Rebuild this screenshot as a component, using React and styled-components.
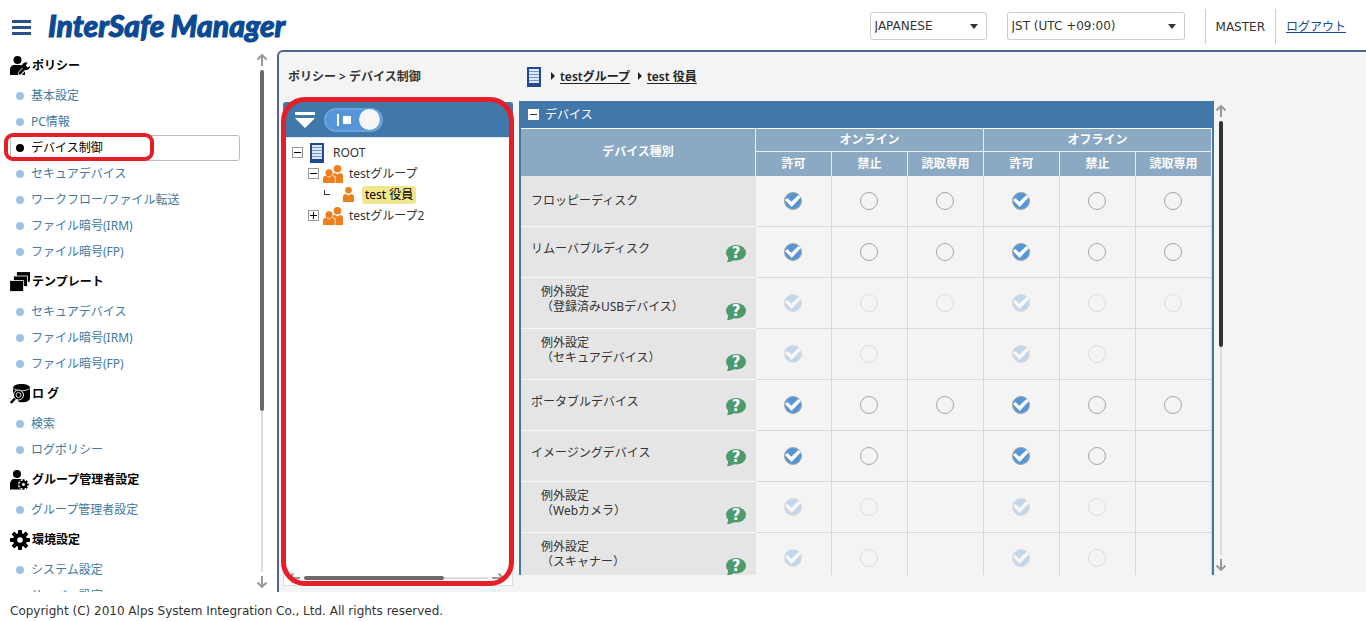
import React, { useState } from 'react';
import styled, { createGlobalStyle, css } from 'styled-components';

const blue = '#4277a9';
const red = '#e61e28';

const Global = createGlobalStyle`
  *, *::before, *::after { box-sizing: border-box; }
  body {
    margin: 0;
    background: #fff;
    color: #333;
    font: 12px/16px "Noto Sans", "Noto Sans CJK JP", sans-serif;
  }
  ul { list-style: none; margin: 0; padding: 0; }
  button { padding: 0; border: 0; background: none; font: inherit; color: inherit; cursor: pointer; }
`;

const Page = styled.div`
  height: 100vh;
  display: flex;
  flex-direction: column;
`;

const Header = styled.header`
  flex: none;
  height: 50px;
  padding: 2px 20px 0 12px;
  display: flex;
  align-items: center;
`;

const MenuButton = styled.button`
  width: 19px;
  height: 15px;
  margin: 2px 17px 0 0;
  border-top: 3px solid #2c4f8f;
  border-bottom: 3px solid #2c4f8f;
  display: flex;
  align-items: center;
  &::before {
    content: "";
    width: 100%;
    height: 3px;
    background: #2c4f8f;
  }
`;

const Logo = styled.h1`
  margin: 0 auto 2px 0;
  color: #0a4a94;
  font: italic 900 30px/34px Lato, sans-serif;
  -webkit-text-stroke: 1px #0a4a94;
  white-space: nowrap;
`;

const SelectBox = styled.div`
  width: ${(p) => p.$width}px;
  height: 28px;
  margin-right: 20px;
  padding-right: 8px;
  display: flex;
  align-items: center;
  border: 1px solid #ccc;
  border-radius: 3px;
  &::after {
    content: "";
    flex: none;
    border: 4px solid transparent;
    border-top: 5px solid #333;
    border-bottom: 0;
  }
`;

const Select = styled.select`
  flex: 1;
  min-width: 0;
  height: 100%;
  padding: 0 4px;
  appearance: none;
  border: 0;
  background: transparent;
  color: #333;
  font: 12px/16px "DejaVu Sans", sans-serif;
`;

const HeaderCell = styled.div`
  height: 35px;
  padding: 2px 0 0 10px;
  display: flex;
  align-items: center;
  border-left: 1px solid #ccc;
  font-family: "DejaVu Sans", "Noto Sans CJK JP", sans-serif;
  & + & { margin-left: 10px; }
`;

const Logout = styled.a`
  color: #1a4a9c;
`;

const Body = styled.div`
  flex: 1;
  min-height: 0;
  display: flex;
`;

const Sidebar = styled.nav`
  flex: none;
  width: 277px;
  padding-right: 9px;
  display: flex;
  overflow: hidden;
`;

const SideMenu = styled.div`
  flex: 1;
  margin-top: -1px;
  padding-right: 16px;
  overflow: hidden;
`;

const SideHeading = styled.h2`
  height: 34px;
  margin: 0;
  padding: 0 0 1px 10px;
  display: flex;
  align-items: center;
  gap: 2px;
  color: #000;
  font-size: 12px;
  font-weight: 600;
  svg { flex: none; }
`;

const SideItem = styled.li`
  position: relative;
  height: 26px;
  margin-left: 10px;
  border: 1px solid ${(p) => (p.$active ? '#bbb' : 'transparent')};
  border-radius: 3px;
`;

const SideLink = styled.a`
  height: 100%;
  padding-left: 5px;
  display: flex;
  align-items: center;
  gap: 7px;
  color: ${(p) => (p.$active ? '#000' : '#42799f')};
  text-decoration: none;
  &::before {
    content: "";
    width: 8px;
    height: 8px;
    border-radius: 50%;
    background: ${(p) => (p.$active ? '#000' : '#9fc3e4')};
  }
`;

const ItemMark = styled.div`
  position: absolute;
  inset: -3px auto -1px -7px;
  width: 150px;
  border: 4px solid ${red};
  border-radius: 9px;
  pointer-events: none;
`;

const Bar = styled.div`
  flex: none;
  display: flex;
  flex-direction: ${(p) => (p.$horizontal ? 'row' : 'column')};
  align-items: center;
  gap: 4px;
  color: #999;
  svg { flex: none; }
`;

const Track = styled.div`
  flex: 1;
  display: flex;
  flex-direction: ${(p) => (p.$horizontal ? 'row' : 'column')};
  justify-content: flex-start;
  align-items: center;
  background: linear-gradient(#dcdcdc, #dcdcdc) center / ${(p) => (p.$horizontal ? '100% 2px' : '2px 100%')} no-repeat;
`;

const Thumb = styled.div`
  width: ${(p) => (p.$horizontal ? p.$size : '4px')};
  height: ${(p) => (p.$horizontal ? '4px' : p.$size)};
  border-radius: 2px;
  background: ${(p) => (p.$dark ? '#333' : '#6b6b6b')};
`;

const BarSlot = styled.div`
  flex: none;
  padding: 4px 0;
  display: flex;
`;

const Main = styled.main`
  flex: 1;
  min-width: 0;
  padding: 0 0 0 4px;
  display: flex;
  flex-direction: column;
  border-top: 2px solid #4f668f;
  border-left: 2px solid #4f668f;
  border-top-left-radius: 6px;
  background: #f4f4f4;
`;

const Crumbs = styled.div`
  flex: none;
  height: 49px;
  padding-left: 5px;
  display: flex;
  align-items: center;
  font-weight: 600;
`;

const Location = styled.div`
  width: 239px;
`;

const Path = styled.div`
  display: flex;
  align-items: center;
`;

const PathLink = styled.a`
  color: #222;
  text-underline-offset: 2px;
  &::before {
    content: "";
    display: inline-block;
    margin: 0 5px 1px 10px;
    border: 4px solid transparent;
    border-left: 4px solid #222;
    border-right: 0;
  }
  & + &::before { margin-left: 8px; }
`;

const Panels = styled.div`
  flex: 1;
  min-height: 0;
  display: flex;
  gap: 6px;
`;

const TreePanel = styled.section`
  position: relative;
  flex: none;
  width: 230px;
  margin: 1px 0 6px;
  display: flex;
  flex-direction: column;
  border: 1px solid #ddd;
  border-top: 0;
  background: #fff;
`;

const PanelMark = styled.div`
  position: absolute;
  inset: -5px -2px -1px -3px;
  border: 5px solid ${red};
  border-radius: 24px;
  pointer-events: none;
`;

const TreeHeader = styled.div`
  height: 35px;
  margin: 0 -1px;
  padding-left: 12px;
  display: flex;
  align-items: center;
  gap: 9px;
  border-radius: 3px 3px 0 0;
  background: ${blue};
`;

const Collapse = styled.button`
  width: 20px;
  height: 16px;
  svg { display: block; }
`;

const Switch = styled.input`
  appearance: none;
  width: 59px;
  height: 24px;
  margin: 0;
  padding: 0 1px 0 11px;
  display: flex;
  align-items: center;
  border: 2px solid #6aa2dc;
  border-radius: 12px;
  background: #5596d8;
  &::before {
    content: "";
    width: 14px;
    height: 12px;
    background:
      linear-gradient(#fff, #fff) left / 2px 12px no-repeat,
      linear-gradient(#fff, #fff) right / 8px 8px no-repeat;
  }
  &::after {
    content: "";
    width: 21px;
    height: 21px;
    margin-left: auto;
    border-radius: 50%;
    background: #f6f6f6;
  }
`;

const Tree = styled.ul`
  flex: 1;
  padding-top: 4px;
  border-top: 1px solid #dbe5ee;
`;

const TreeRow = styled.li`
  height: 21px;
  padding-left: ${(p) => 8 + p.$level * 16}px;
  display: flex;
  align-items: center;
  svg { flex: none; }
`;

const Expander = styled.button`
  flex: none;
  width: 11px;
  height: 11px;
  margin-right: 4px;
  border: 1px solid #999;
  background:
    linear-gradient(#000, #000) center / 7px 1px no-repeat,
    linear-gradient(#000, #000) center / 1px ${(p) => (p.$open ? 0 : 7)}px no-repeat,
    #fff;
`;

const RootIcon = styled.span`
  display: flex;
  margin: 0 3px;
`;

const Elbow = styled.span`
  width: 6px;
  height: 5px;
  margin: 0 13px 4px 0;
  border: 1px solid #333;
  border-width: 0 0 1px 1px;
`;

const NodeLabel = styled.span`
  height: 18px;
  margin-left: 3px;
  padding: 0 3px;
  line-height: 18px;
  border-radius: 3px;
  ${(p) => p.$selected && css`
    margin-left: 8px;
    background: #f0e68c;
    color: #000;
  `}
`;

const TreeScroll = styled.div`
  padding: 0 8px 1px 4px;
`;

const TableArea = styled.section`
  flex: 0 1 708px;
  min-width: 0;
  margin-bottom: 17px;
  display: flex;
  gap: 1px;
`;

const TablePanel = styled.div`
  flex: 1;
  min-width: 0;
  overflow: hidden;
  border: 2px solid ${blue};
  border-width: 0 2px;
`;

const TableTitle = styled.div`
  height: 27px;
  padding-left: 7px;
  display: flex;
  align-items: center;
  gap: 6px;
  background: ${blue};
  color: #fff;
`;

const FoldButton = styled.button`
  width: 11px;
  height: 11px;
  background: linear-gradient(#333, #333) center / 7px 1px no-repeat, #fff;
`;

const Grid = styled.table`
  width: 100%;
  table-layout: fixed;
  border-collapse: separate;
  border-spacing: 0;
  border-top: 1px dotted #fff;
`;

const NameCol = styled.col``;
const OptionCol = styled.col`
  width: 76px;
`;

const HeadCell = styled.th`
  height: ${(p) => (p.$group ? 23 : 24)}px;
  padding: 0 0 1px;
  border-right: 1px solid #e6edf3;
  border-bottom: ${(p) => (p.$group ? '1px solid #e6edf3' : '0')};
  background: #8ca9c4;
  color: #fff;
  font-weight: 700;
`;

const NameCell = styled.th`
  height: 51px;
  padding: 0 10px 2px;
  border-bottom: 1px solid #f8f8f8;
  background: #e5e5e5;
  text-align: left;
  font-weight: 400;
`;

const NameBody = styled.div`
  padding-left: ${(p) => (p.$sub ? 10 : 0)}px;
  display: flex;
  align-items: flex-end;
  justify-content: space-between;
  line-height: 15px;
`;

const NameText = styled.span`
  margin-bottom: ${(p) => (p.$raised ? 6 : 0)}px;
  white-space: pre-line;
`;

const HelpButton = styled.button`
  width: 20px;
  height: 17px;
  svg { display: block; }
`;

const OptionCell = styled.td`
  height: 51px;
  padding: 0 1px 0 0;
  border-right: 1px solid #d8d8d8;
  border-bottom: 1px solid #d8d8d8;
  text-align: center;
`;

const Radio = styled.input`
  appearance: none;
  width: 18px;
  height: 18px;
  margin: 0;
  display: inline-grid;
  place-content: center;
  vertical-align: middle;
  border: 1px solid #a6a6a6;
  border-radius: 50%;
  &:checked { background: #5596d8; }
  &:checked::after {
    content: "";
    width: 16px;
    height: 12px;
    background: #fff;
    clip-path: polygon(0 42%, 16% 25%, 40% 56%, 84% 0, 100% 16%, 42% 100%);
  }
  &:disabled { opacity: 0.3; }
`;

const Footer = styled.footer`
  flex: none;
  height: 29px;
  padding: 11px 10px 0;
  font-family: "DejaVu Sans", sans-serif;
`;

function Arrow({ dir }) {
  const turn = { up: 0, right: 90, down: 180, left: 270 }[dir];
  return (
    <svg width="12" height="12" viewBox="0 0 12 12" fill="none" stroke="currentColor" strokeWidth="2" aria-hidden="true">
      <g transform={`rotate(${turn} 6 6)`}>
        <path d="M6 12V1M1.5 5.5 6 1l4.500 4.500" />
      </g>
    </svg>
  );
}

function Scroll({ size, horizontal, dark }) {
  return (
    <Bar $horizontal={horizontal}>
      <Arrow dir={horizontal ? 'left' : 'up'} />
      <Track $horizontal={horizontal}>
        <Thumb $horizontal={horizontal} $size={size} $dark={dark} />
      </Track>
      <Arrow dir={horizontal ? 'right' : 'down'} />
    </Bar>
  );
}

function Cog({ cx, cy, r }) {
  return (
    <g transform={`translate(${cx} ${cy}) scale(${r / 10})`}>
      {[0, 45, 90, 135].map((a) => (
        <rect key={a} x="-2" y="-10" width="4" height="20" rx="1" transform={`rotate(${a})`} />
      ))}
      <circle r="7" />
      <circle r="2.800" fill="#fff" />
    </g>
  );
}

const sideIcons = {
  wrench: (
    <>
      <circle cx="7.500" cy="4" r="4" />
      <path d="M0 19v-5c0-3.500 2-5 4-5h6.500c1.500 0 2.500 1 3 2L8 19z" />
      <path d="M15 19v-5l-4 5z" />
      <path d="M9 18.500 16 11" stroke="#fff" strokeWidth="4.500" />
      <path d="M9 18 16.500 10.500" stroke="#000" strokeWidth="2.600" />
      <path d="M17.500 6.500a4 4 0 1 0 2.500 3.500l-2.500 1.500-1.800-1.500z" />
    </>
  ),
  layers: (
    <g stroke="#fff" strokeWidth="0.800">
      <path d="M6.500-.4h14v10.500h-14z" />
      <path d="M3.500 4h14v10.500h-14z" />
      <path d="M-.4 8.500h14v11h-14z" />
    </g>
  ),
  log: (
    <>
      <path d="M3 4c0-5.300 17-5.300 17 0v10c0 3.500-6 5-11 4L3 10z" />
      <path d="M3.500 4.500c3 3 13 3 16 0" fill="none" stroke="#fff" strokeWidth="0.800" />
      <circle cx="8.500" cy="11" r="5" stroke="#fff" strokeWidth="1" />
      <circle cx="8.500" cy="11" r="2.500" fill="none" stroke="#fff" strokeWidth="0.800" />
      <path d="M5 14.500.8 19" stroke="#000" strokeWidth="2.400" />
    </>
  ),
  admin: (
    <>
      <circle cx="7" cy="4" r="4" />
      <path d="M0 19.500v-5C0 11 2 9 4 9h6c2 0 3.500 1.500 3.500 4v6.500z" />
      <circle cx="13.500" cy="14.500" r="5.500" fill="#fff" />
      <Cog cx={13.5} cy={14.5} r={5.3} />
    </>
  ),
  gear: <Cog cx={10} cy={10} r={10} />,
};

function SideIcon({ name }) {
  return (
    <svg width="20" height="20" viewBox="0 0 20 20" aria-hidden="true">
      {sideIcons[name]}
    </svg>
  );
}

function ServerIcon() {
  return (
    <svg width="14" height="20" viewBox="0 0 14 20" aria-hidden="true">
      <path d="M0 0h14v20H0z" fill="#204a93" />
      <path d="M2 2h10v14H2z" fill="#dfe8f4" />
      <path d="M2 4.500h10M2 7.500h10M2 10.500h10M2 13.500h10" stroke="#7396c6" strokeWidth="1" />
    </svg>
  );
}

function GroupIcon() {
  return (
    <svg width="20" height="18" viewBox="0 0 20 18" fill="#ee7f1d" aria-hidden="true">
      <circle cx="14.500" cy="3.800" r="3.800" />
      <path d="M9 18V9.500c1-1.300 2-1.500 3-1.500l2.500 1.500L17 8c2 0 3 1 3 3v7z" />
      <circle cx="6" cy="7.800" r="4.300" fill="#fff" />
      <path d="M12.500 18v-5c0-2-.8-2.600-2-2.600H8V18z" fill="#fff" />
      <circle cx="6" cy="7.800" r="3.600" />
      <path d="M0 18v-4c0-2.200 1-3.200 3-3.200l3 1.700 3-1.700c2 0 2.800 1 2.800 3.200v4z" />
    </svg>
  );
}

function PersonIcon() {
  return (
    <svg width="11" height="15" viewBox="0 0 11 15" fill="#ee7f1d" aria-hidden="true">
      <circle cx="5.500" cy="3.300" r="3.300" />
      <path d="M0 15v-5c0-2 1-3 2.500-3l3 1.500 3-1.500C10 7 11 8 11 10v5z" />
    </svg>
  );
}

function HelpIcon() {
  return (
    <svg width="20" height="17" viewBox="0 0 20 17" aria-hidden="true">
      <ellipse cx="10" cy="7.800" rx="10" ry="7.800" fill="#4f9a6c" />
      <path d="M2 11.500c.3 2.500-.3 4-1 5.500 3 0 5-.6 7-2z" fill="#4f9a6c" />
      <text x="10" y="13" textAnchor="middle" fill="#fff" fontFamily="DejaVu Sans" fontWeight="700" fontSize="15">?</text>
    </svg>
  );
}

const menu = [
  { icon: 'wrench', title: 'ポリシー', items: ['基本設定', 'PC情報', 'デバイス制御', 'セキュアデバイス', 'ワークフロー/ファイル転送', 'ファイル暗号(IRM)', 'ファイル暗号(FP)'] },
  { icon: 'layers', title: 'テンプレート', items: ['セキュアデバイス', 'ファイル暗号(IRM)', 'ファイル暗号(FP)'] },
  { icon: 'log', title: 'ロ グ', items: ['検索', 'ログポリシー'] },
  { icon: 'admin', title: 'グループ管理者設定', items: ['グループ管理者設定'] },
  { icon: 'gear', title: '環境設定', items: ['システム設定', 'サーバー設定'] },
];

const choices = ['許可', '禁止', '読取専用'];
const modes = ['オンライン', 'オフライン'];

const devices = [
  { name: 'フロッピーディスク', options: 3 },
  { name: 'リムーバブルディスク', options: 3, help: true },
  { name: '例外設定\n（登録済みUSBデバイス）', options: 3, help: true, sub: true },
  { name: '例外設定\n（セキュアデバイス）', options: 2, help: true, sub: true },
  { name: 'ポータブルデバイス', options: 3, help: true },
  { name: 'イメージングデバイス', options: 2, help: true },
  { name: '例外設定\n（Webカメラ）', options: 2, help: true, sub: true },
  { name: '例外設定\n（スキャナー）', options: 2, help: true, sub: true },
];

function DeviceRow({ device, index }) {
  const [picked, setPicked] = useState([0, 0]);
  return (
    <tr>
      <NameCell scope="row">
        <NameBody $sub={device.sub}>
          <NameText $raised={device.help}>{device.name}</NameText>
          {device.help && <HelpButton type="button" aria-label="ヘルプ"><HelpIcon /></HelpButton>}
        </NameBody>
      </NameCell>
      {modes.map((mode, m) => choices.map((choice, c) => (
        <OptionCell key={mode + choice}>
          {c < device.options && (
            <Radio
              type="radio"
              name={`device-${index}-${m}`}
              aria-label={`${device.name} ${mode} ${choice}`}
              checked={picked[m] === c}
              disabled={device.sub}
              onChange={() => setPicked(picked.map((v, i) => (i === m ? c : v)))}
            />
          )}
        </OptionCell>
      )))}
    </tr>
  );
}

export default function App() {
  return (
    <Page>
      <Global />
      <Header>
        <MenuButton type="button" aria-label="メニュー" />
        <Logo>InterSafe Manager</Logo>
        <SelectBox $width={117}>
          <Select aria-label="言語"><option>JAPANESE</option></Select>
        </SelectBox>
        <SelectBox $width={178}>
          <Select aria-label="タイムゾーン"><option>JST (UTC +09:00)</option></Select>
        </SelectBox>
        <HeaderCell>MASTER</HeaderCell>
        <HeaderCell><Logout href="#logout">ログアウト</Logout></HeaderCell>
      </Header>

      <Body>
        <Sidebar>
          <SideMenu>
            {menu.map((group) => (
              <section key={group.title}>
                <SideHeading><SideIcon name={group.icon} />{group.title}</SideHeading>
                <ul>
                  {group.items.map((item) => {
                    const active = item === 'デバイス制御';
                    return (
                      <SideItem key={item} $active={active}>
                        <SideLink href="#menu" $active={active}>{item}</SideLink>
                        {active && <ItemMark />}
                      </SideItem>
                    );
                  })}
                </ul>
              </section>
            ))}
          </SideMenu>
          <BarSlot><Scroll size="68%" /></BarSlot>
        </Sidebar>

        <Main>
          <Crumbs>
            <Location>ポリシー &gt; デバイス制御</Location>
            <Path>
              <ServerIcon />
              <PathLink href="#group">testグループ</PathLink>
              <PathLink href="#member">test 役員</PathLink>
            </Path>
          </Crumbs>
          <Panels>
            <TreePanel>
              <TreeHeader>
                <Collapse type="button" aria-label="折りたたむ">
                  <svg width="20" height="16" viewBox="0 0 20 16" fill="#fff" aria-hidden="true">
                    <path d="M0 0h20v3H0zM0 6h20L10 16z" />
                  </svg>
                </Collapse>
                <Switch type="checkbox" role="switch" aria-label="表示切替" defaultChecked />
              </TreeHeader>
              <Tree>
                <TreeRow $level={0}><Expander $open type="button" aria-label="ROOTを閉じる" /><RootIcon><ServerIcon /></RootIcon><NodeLabel>ROOT</NodeLabel></TreeRow>
                <TreeRow $level={1}><Expander $open type="button" aria-label="testグループを閉じる" /><GroupIcon /><NodeLabel>testグループ</NodeLabel></TreeRow>
                <TreeRow $level={2}><Elbow /><PersonIcon /><NodeLabel $selected>test 役員</NodeLabel></TreeRow>
                <TreeRow $level={1}><Expander type="button" aria-label="testグループ2を開く" /><GroupIcon /><NodeLabel>testグループ2</NodeLabel></TreeRow>
              </Tree>
              <TreeScroll><Scroll horizontal size="76%" /></TreeScroll>
              <PanelMark />
            </TreePanel>

            <TableArea>
              <TablePanel>
                <TableTitle><FoldButton type="button" aria-label="閉じる" />デバイス</TableTitle>
                <Grid>
                  <colgroup>
                    <NameCol />
                    {modes.map((m) => choices.map((c) => <OptionCol key={m + c} />))}
                  </colgroup>
                  <thead>
                    <tr>
                      <HeadCell rowSpan={2} scope="col">デバイス種別</HeadCell>
                      {modes.map((m) => <HeadCell key={m} $group colSpan={3} scope="colgroup">{m}</HeadCell>)}
                    </tr>
                    <tr>
                      {modes.map((m) => choices.map((c) => <HeadCell key={m + c} scope="col">{c}</HeadCell>))}
                    </tr>
                  </thead>
                  <tbody>
                    {devices.map((d, i) => <DeviceRow key={d.name} device={d} index={i} />)}
                  </tbody>
                </Grid>
              </TablePanel>
              <BarSlot><Scroll dark size="52%" /></BarSlot>
            </TableArea>
          </Panels>
        </Main>
      </Body>
      <Footer>Copyright (C) 2010 Alps System Integration Co., Ltd. All rights reserved.</Footer>
    </Page>
  );
}
